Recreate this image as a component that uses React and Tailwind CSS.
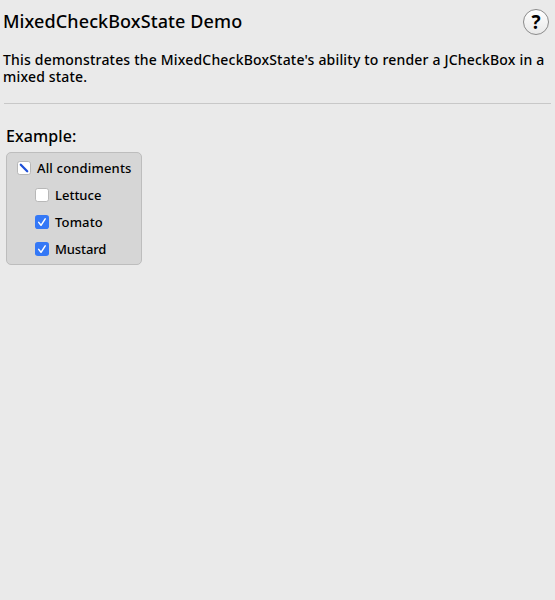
const rows = [
  { label: 'All condiments', state: 'mixed', indent: '', text: 'tracking-[0.17px]' },
  { label: 'Lettuce', state: 'off', indent: 'ml-[18px]', text: 'tracking-[0px]' },
  { label: 'Tomato', state: 'on', indent: 'ml-[18px]', text: 'tracking-[0.15px]' },
  { label: 'Mustard', state: 'on', indent: 'ml-[18px]', text: 'tracking-[-0.12px]' },
];

function Box({ state }) {
  return (
    <svg width="14" height="14" viewBox="0 0 14 14" className="mb-[2px] shrink-0">
      {state === 'on' ? (
        <>
          <rect width="14" height="14" rx="2.8" fill="#3478f6" />
          <path d="M3.7 7.4 6 10.3 10.2 3.8" fill="none" stroke="#fff" strokeWidth="1.5" strokeLinecap="round" strokeLinejoin="round" />
        </>
      ) : (
        <>
          <rect x=".5" y=".5" width="13" height="13" rx="2.3" fill="#fff" stroke="#b8b8b8" />
          {state === 'mixed' && <path d="M3.8 3.8 10.2 10.2" stroke="#1f50d8" strokeWidth="2.3" strokeLinecap="round" />}
        </>
      )}
    </svg>
  );
}

export default function App() {
  return (
    <main className="h-[600px] w-[555px] overflow-hidden bg-[#eaeaea] font-['Noto_Sans','Open_Sans',sans-serif] font-medium text-black">
      <header className="flex h-[51px] justify-between pt-[9px] pr-[6px] pl-[3px]">
        <h1 className="text-[18px] leading-[25px] tracking-[0.1px] whitespace-nowrap">MixedCheckBoxState Demo</h1>
        <button aria-label="Help" className="flex size-[26px] items-center justify-center rounded-full border border-[#8b8b8b] bg-linear-to-b from-white to-[#e9e9e9] text-[19px] leading-none font-bold">
          ?
        </button>
      </header>
      <p className="w-[552px] pl-[3px] text-[14px] leading-[17px] tracking-[0.185px]">
        This demonstrates the MixedCheckBoxState's ability to render a JCheckBox in a mixed state.
      </p>
      <hr className="mt-[18px] mr-[4px] ml-[4px] border-[#c8c8c8]" />
      <h2 className="mt-[22px] pl-[6px] text-[16px] leading-[20px] tracking-[0.1px]">Example:</h2>
      <section className="mt-[6px] ml-[6px] flex h-[113px] w-[136px] flex-col rounded-[5px] border border-[#bdbdbd] bg-[#d6d6d6] pt-[2px] pl-[10px]">
        {rows.map((r) => (
          <label key={r.label} className={`flex h-[27px] items-center gap-[6px] text-[13px] leading-none whitespace-nowrap ${r.indent} ${r.text}`}>
            <Box state={r.state} />
            <span>{r.label}</span>
          </label>
        ))}
      </section>
    </main>
  );
}
